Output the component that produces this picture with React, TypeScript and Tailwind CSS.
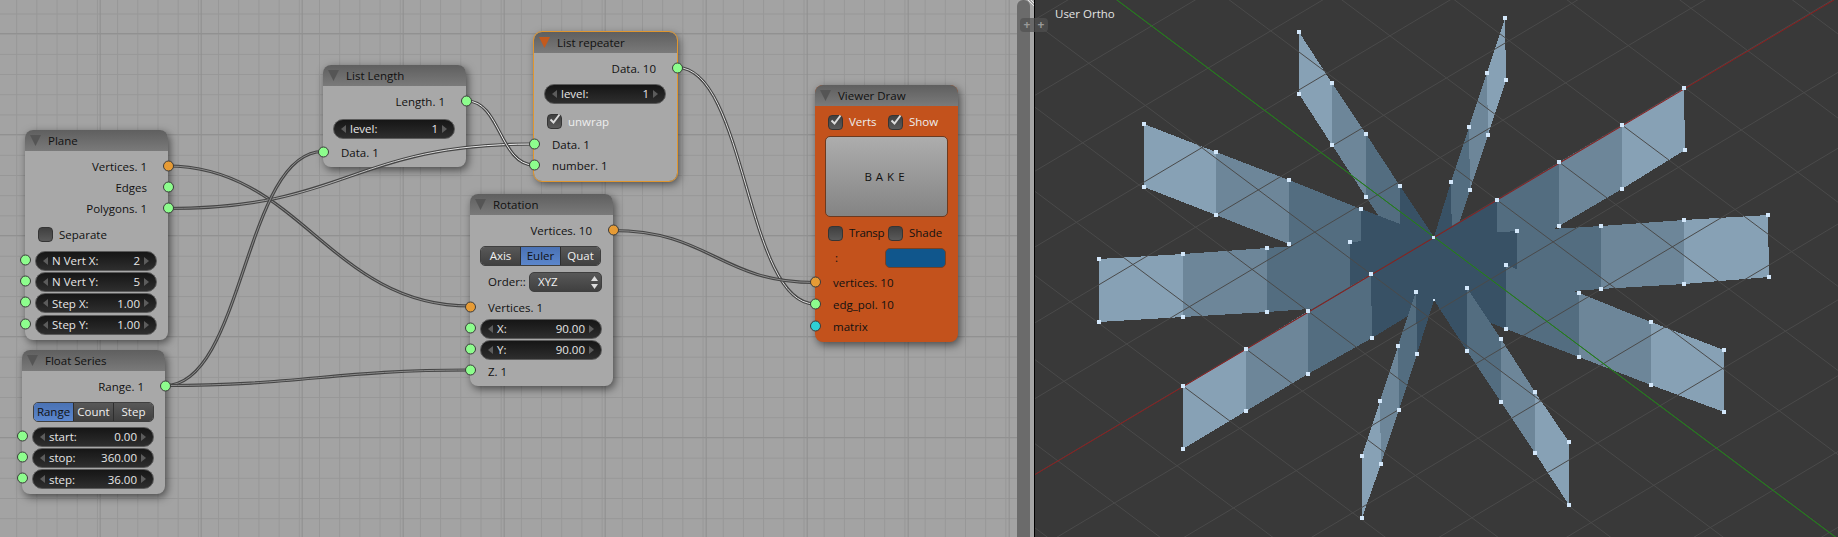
import type { ReactNode } from 'react';

type SocketColor = 'green' | 'orange' | 'cyan';
type Pt = [number, number];

const SOCKET_CLASS: Record<SocketColor, string> = {
  green: 'bg-[#8dfd8d]',
  orange: 'bg-[#e69b35]',
  cyan: 'bg-[#2fd0d4]',
};

// top edge and bottom edge of each fin, outer end first, painted far to near
const FINS: { top: Pt[]; bottom: Pt[]; hideBottomInner?: boolean }[] = [
  { top: [[1505, 18], [1487, 73], [1469, 127], [1451, 182], [1434, 237]], bottom: [[1506, 80], [1488, 135], [1470, 190], [1452, 245], [1434, 300]], hideBottomInner: true },
  { top: [[1299, 32], [1332, 83], [1366, 134], [1400, 186], [1434, 237]], bottom: [[1299, 94], [1332, 145], [1366, 197], [1400, 248], [1434, 300]], hideBottomInner: true },
  { top: [[1684, 88], [1622, 125], [1559, 162], [1497, 200], [1434, 237]], bottom: [[1685, 150], [1622, 189], [1559, 226], [1497, 263], [1434, 300]], hideBottomInner: true },
  { top: [[1144, 124], [1216, 152], [1289, 180], [1361, 209], [1434, 237]], bottom: [[1144, 187], [1216, 215], [1289, 244], [1362, 272], [1434, 300]], hideBottomInner: true },
  { top: [[1768, 215], [1684, 220], [1601, 226], [1517, 231], [1434, 237]], bottom: [[1769, 277], [1684, 284], [1601, 289], [1517, 295], [1434, 300]], hideBottomInner: true },
  { top: [[1099, 259], [1183, 254], [1267, 248], [1350, 242], [1434, 237]], bottom: [[1099, 322], [1183, 317], [1267, 312], [1350, 306], [1434, 300]], hideBottomInner: true },
  { top: [[1724, 350], [1651, 322], [1579, 293], [1506, 265], [1434, 237]], bottom: [[1724, 412], [1651, 385], [1579, 357], [1506, 329], [1434, 300]] },
  { top: [[1183, 386], [1246, 349], [1308, 311], [1371, 274], [1434, 237]], bottom: [[1183, 449], [1246, 411], [1308, 374], [1372, 338], [1434, 300]] },
  { top: [[1569, 442], [1535, 392], [1501, 339], [1467, 288], [1434, 237]], bottom: [[1569, 505], [1535, 453], [1501, 402], [1467, 351], [1434, 300]] },
  { top: [[1362, 456], [1380, 401], [1398, 346], [1416, 292], [1434, 237]], bottom: [[1362, 518], [1381, 464], [1399, 410], [1417, 354], [1434, 300]] },
];

const BAND_COLORS = ['#87a1b5', '#6d8699', '#536d80', '#385165'];

const WIRES: { d: string; core: string }[] = [
  { d: 'M167 166C300 166 330 306 470 306', core: '#8c8c8c' },
  { d: 'M167 208.5C350 208.5 350 144 534 144', core: 'url(#fade)' },
  { d: 'M165 385.5C244 385.5 244 151.5 323 151.5', core: '#8c8c8c' },
  { d: 'M165 385.5C300 385.5 335 370 470 370', core: '#8c8c8c' },
  { d: 'M467 101C500 101 500 165 534 165', core: '#eeeeee' },
  { d: 'M677 67.5C746 67.5 746 304 815 304', core: '#dddddd' },
  { d: 'M612 230.5C710 230.5 720 282.5 815 282.5', core: '#8c8c8c' },
];

function Socket({ side, color = 'green' }: { side: 'in' | 'out'; color?: SocketColor }) {
  return (
    <span
      className={`absolute top-[calc(50%-1px)] z-20 h-[11px] w-[11px] -translate-y-1/2 rounded-full border border-[#3a3a3a] ${SOCKET_CLASS[color]} ${
        side === 'in' ? 'left-[-5.5px]' : 'right-[-5.5px]'
      }`}
    />
  );
}

function Node({
  title,
  className,
  arrow = '#555555',
  body = 'bg-[#a8a8a8]',
  children,
}: {
  title: string;
  className: string;
  arrow?: string;
  body?: string;
  children: ReactNode;
}) {
  return (
    <div className={`absolute w-[143px] rounded-[8px] shadow-[2px_3px_8px_rgba(0,0,0,0.55)] ${body} ${className}`}>
      <div className="flex h-[21px] items-center gap-[7px] rounded-t-[8px] bg-gradient-to-b from-[#5f5f5f] to-[#7a7a7a] pl-[5px] text-[#111]">
        <svg width="11" height="11" viewBox="0 0 11 11">
          <polygon points="0,0 11,0 5.5,11" fill={arrow} />
        </svg>
        <span>{title}</span>
      </div>
      <div className="pb-[4px] pt-[5px]">{children}</div>
    </div>
  );
}

function OutputRow({ label, color }: { label: string; color?: SocketColor }) {
  return (
    <div className="relative flex h-[21px] items-center justify-end pr-[21px] text-[#111]">
      {label}
      <Socket side="out" color={color} />
    </div>
  );
}

function InputRow({ label, color, tall }: { label: string; color?: SocketColor; tall?: boolean }) {
  return (
    <div className={`relative flex items-center pl-[18px] text-[#111] ${tall ? 'h-[22px]' : 'h-[21px]'}`}>
      {label}
      <Socket side="in" color={color} />
    </div>
  );
}

function NumberField({ label, value, socket = true }: { label: string; value: string; socket?: boolean }) {
  return (
    <div className="relative flex h-[21.4px] items-center px-[10px]">
      <div className="flex h-[20px] w-[122px] items-center rounded-full border border-[#5a5a5a] bg-gradient-to-b from-[#161616] to-[#2e2e2e] px-[7px] text-[#e6e6e6]">
        <svg width="5" height="8" viewBox="0 0 5 8">
          <polygon points="5,0 5,8 0,4" fill="#5c5c5c" />
        </svg>
        <span className="ml-[4px]">{label}</span>
        <span className="ml-auto mr-[4px]">{value}</span>
        <svg width="5" height="8" viewBox="0 0 5 8">
          <polygon points="0,0 0,8 5,4" fill="#5c5c5c" />
        </svg>
      </div>
      {socket && <Socket side="in" />}
    </div>
  );
}

function Checkbox({ label, checked, labelClass }: { label: string; checked?: boolean; labelClass: string }) {
  return (
    <div className="flex items-center gap-[6px]">
      <span className="relative h-[15px] w-[15px] shrink-0 rounded-[4px] border border-[#353535] bg-gradient-to-b from-[#404040] to-[#5a5a5a]">
        {checked && (
          <svg className="absolute left-0 top-[-3px]" width="14" height="14" viewBox="0 0 14 14">
            <path d="M2.5 7.5L5.5 10.5L11.5 2.5" fill="none" stroke="#dcdcdc" strokeWidth="2" />
          </svg>
        )}
      </span>
      <span className={labelClass}>{label}</span>
    </div>
  );
}

function Segmented({ options, active }: { options: string[]; active: string }) {
  return (
    <div className="flex h-[20px] w-[121px] overflow-hidden rounded-[5px] border border-[#3f3f3f]">
      {options.map((o) => (
        <div
          key={o}
          className={`flex flex-1 items-center justify-center border-l border-[#2e2e2e] first:border-l-0 ${
            o === active
              ? 'bg-gradient-to-b from-[#4a72b4] to-[#5b86cc] text-[#111]'
              : 'bg-gradient-to-b from-[#585858] to-[#404040] text-[#f0f0f0]'
          }`}
        >
          {o}
        </div>
      ))}
    </div>
  );
}

function Viewport() {
  const steps = Array.from({ length: 41 }, (_, i) => i - 20);
  return (
    <svg className="h-full w-full" viewBox="1035 0 803 537">
      <g shapeRendering="crispEdges">
        {FINS.map((f, i) =>
          BAND_COLORS.map((c, band) => (
            <polygon
              key={`${i}-${band}`}
              fill={c}
              points={[f.top[band], f.top[band + 1], f.bottom[band + 1], f.bottom[band]].map((p) => p.join(',')).join(' ')}
            />
          )),
        )}
      </g>
      <g stroke="#4a4a4a" strokeWidth="1">
        {steps.map((k) => {
          const x = 1434 + 56.5 * k;
          const y = 237 + 42.2 * k;
          return <line key={k} x1={x - 1500} y1={y + 1500 * 0.595} x2={x + 1500} y2={y - 1500 * 0.595} />;
        })}
        {steps.map((k) => {
          const x = 1434 + 62.7 * k;
          const y = 237 - 37.3 * k;
          return <line key={k} x1={x - 1500} y1={y - 1500 * 0.747} x2={x + 1500} y2={y + 1500 * 0.747} />;
        })}
      </g>
      <line x1="1035" y1="474.6" x2="1834" y2="0" stroke="#8f1d1d" strokeWidth="1" />
      <line x1="1117" y1="0" x2="1838" y2="539" stroke="#1c8a12" strokeWidth="1" />
      <g fill="#d3e7fa" shapeRendering="crispEdges">
        {FINS.flatMap((f, i) =>
          [...f.top.slice(0, 4), ...f.bottom.slice(0, f.hideBottomInner ? 3 : 4)].map((p, j) => (
            <rect key={`${i}-${j}`} x={p[0] - 2} y={p[1] - 2} width="4" height="4" />
          )),
        )}
        <rect x="1432" y="236" width="3" height="3" />
        <rect x="1433" y="299" width="2" height="2" />
      </g>
    </svg>
  );
}

export default function App() {
  return (
    <div className="flex h-[537px] w-[1838px] overflow-hidden bg-[#393939] font-['Open_Sans',sans-serif] text-[11.5px]">
      {/* Node editor */}
      <div className="relative w-[1017px] bg-[#a3a3a3] bg-[linear-gradient(#919191_1px,transparent_1px),linear-gradient(90deg,#8e8e8e_1px,transparent_1px),linear-gradient(#979797_1px,transparent_1px),linear-gradient(90deg,#979797_1px,transparent_1px)] bg-[size:101px_101px,101px_101px,20.2px_20.2px,20.2px_20.2px] bg-[position:0_33px,99.7px_0,0_13.5px,16.2px_0]">
        <Node title="Plane" className="left-[25px] top-[130px]">
          <OutputRow label="Vertices. 1" color="orange" />
          <OutputRow label="Edges" />
          <OutputRow label="Polygons. 1" />
          <div className="flex h-[31px] items-center pl-[13px]">
            <Checkbox label="Separate" labelClass="text-[#111]" />
          </div>
          <NumberField label="N Vert X:" value="2" />
          <NumberField label="N Vert Y:" value="5" />
          <NumberField label="Step X:" value="1.00" />
          <NumberField label="Step Y:" value="1.00" />
        </Node>

        <Node title="Float Series" className="left-[22px] top-[350px]">
          <OutputRow label="Range. 1" />
          <div className="flex h-[29px] items-center pl-[11px]">
            <Segmented options={['Range', 'Count', 'Step']} active="Range" />
          </div>
          <NumberField label="start:" value="0.00" />
          <NumberField label="stop:" value="360.00" />
          <NumberField label="step:" value="36.00" />
        </Node>

        <Node title="List Length" className="left-[323px] top-[65px]">
          <OutputRow label="Length. 1" />
          <div className="mb-[3px] mt-[6px]">
            <NumberField label="level:" value="1" socket={false} />
          </div>
          <InputRow label="Data. 1" />
        </Node>

        <Node title="List repeater" arrow="#c25a1e" className="left-[534px] top-[32px] outline outline-1 outline-[#e0962e]">
          <OutputRow label="Data. 10" />
          <div className="my-[4px]">
            <NumberField label="level:" value="1" socket={false} />
          </div>
          <div className="flex h-[26px] items-center pl-[13px]">
            <Checkbox label="unwrap" checked labelClass="text-[#eeeeee]" />
          </div>
          <InputRow label="Data. 1" />
          <div className="mb-[1px]">
            <InputRow label="number. 1" />
          </div>
        </Node>

        <Node title="Rotation" className="left-[470px] top-[194px]">
          <OutputRow label="Vertices. 10" color="orange" />
          <div className="flex h-[30px] items-center pl-[10px]">
            <Segmented options={['Axis', 'Euler', 'Quat']} active="Euler" />
          </div>
          <div className="mb-[4px] flex h-[22px] items-center pl-[18px] text-[#111]">
            <span className="w-[41px]">Order::</span>
            <div className="flex h-[20px] w-[73px] items-center justify-between rounded-[5px] border border-[#3f3f3f] bg-gradient-to-b from-[#585858] to-[#404040] pl-[8px] pr-[3px] text-[#f0f0f0]">
              XYZ
              <svg width="7" height="13" viewBox="0 0 7 13">
                <polygon points="3.5,0 7,5 0,5" fill="#dddddd" />
                <polygon points="3.5,13 7,8 0,8" fill="#dddddd" />
              </svg>
            </div>
          </div>
          <InputRow label="Vertices. 1" color="orange" />
          <NumberField label="X:" value="90.00" />
          <NumberField label="Y:" value="90.00" />
          <InputRow label="Z. 1" />
        </Node>

        <Node title="Viewer Draw" body="bg-[#c3521c]" className="left-[815px] top-[85px]">
          <div className="grid h-[22px] grid-cols-[60px_60px] items-center pl-[13px]">
            <Checkbox label="Verts" checked labelClass="text-[#eeeeee]" />
            <Checkbox label="Show" checked labelClass="text-[#eeeeee]" />
          </div>
          <div className="mx-[10px] mt-[3px] flex h-[81px] items-center justify-center rounded-[5px] border border-[#6b3a20] bg-gradient-to-b from-[#adadad] to-[#848484] tracking-[4px] text-[#111]">
            BAKE
          </div>
          <div className="mt-[4px] grid h-[24px] grid-cols-[60px_60px] items-center pl-[13px]">
            <Checkbox label="Transp" labelClass="text-[#111] tracking-[-0.3px]" />
            <Checkbox label="Shade" labelClass="text-[#111]" />
          </div>
          <div className="mb-[1px] flex h-[26px] items-center justify-between pl-[20px] pr-[12px] text-[#111]">
            :
            <span className="h-[20px] w-[61px] rounded-[5px] border border-[#7a4020] bg-[#10568c]" />
          </div>
          <InputRow label="vertices. 10" color="orange" tall />
          <InputRow label="edg_pol. 10" tall />
          <InputRow label="matrix" color="cyan" tall />
        </Node>

        {/* Links sit over the nodes, sockets stay above them */}
        <svg className="pointer-events-none absolute inset-0 z-10 h-full w-full" fill="none">
          <defs>
            <linearGradient id="fade" gradientUnits="userSpaceOnUse" x1="167" y1="0" x2="534" y2="0">
              <stop offset="0" stopColor="#7a7a7a" />
              <stop offset="1" stopColor="#ffffff" />
            </linearGradient>
          </defs>
          {WIRES.map((w) => (
            <g key={w.d}>
              <path d={w.d} stroke="#454545" strokeWidth="3.2" />
              <path d={w.d} stroke={w.core} strokeWidth="1" />
            </g>
          ))}
        </svg>
      </div>

      {/* Scroll bar and area edge */}
      <div className="relative z-20 flex w-[18px] shrink-0 bg-[#a5a5a5]">
        <div className="w-[13px] rounded-t-[6px] bg-[#6b6b6b]" />
        <div className="ml-auto w-px bg-black" />
        <svg className="absolute left-[10px] top-0" width="7" height="7" viewBox="0 0 7 7">
          <path d="M1 0L7 6M4 0L7 3" stroke="#e6e6e6" strokeWidth="1" />
        </svg>
        <div className="absolute left-[3px] top-[18px] flex h-[14px] w-[28px] items-center justify-around rounded-[4px] bg-[rgba(80,80,80,0.7)] text-[12px] font-bold leading-none text-[#999999]">
          <span>+</span>
          <span>+</span>
        </div>
      </div>

      {/* 3D viewport */}
      <div className="relative w-[803px] shrink-0 bg-[#393939]">
        <Viewport />
        <span className="absolute left-[20px] top-[5px] text-[#e4e4e4]">User Ortho</span>
      </div>
    </div>
  );
}
